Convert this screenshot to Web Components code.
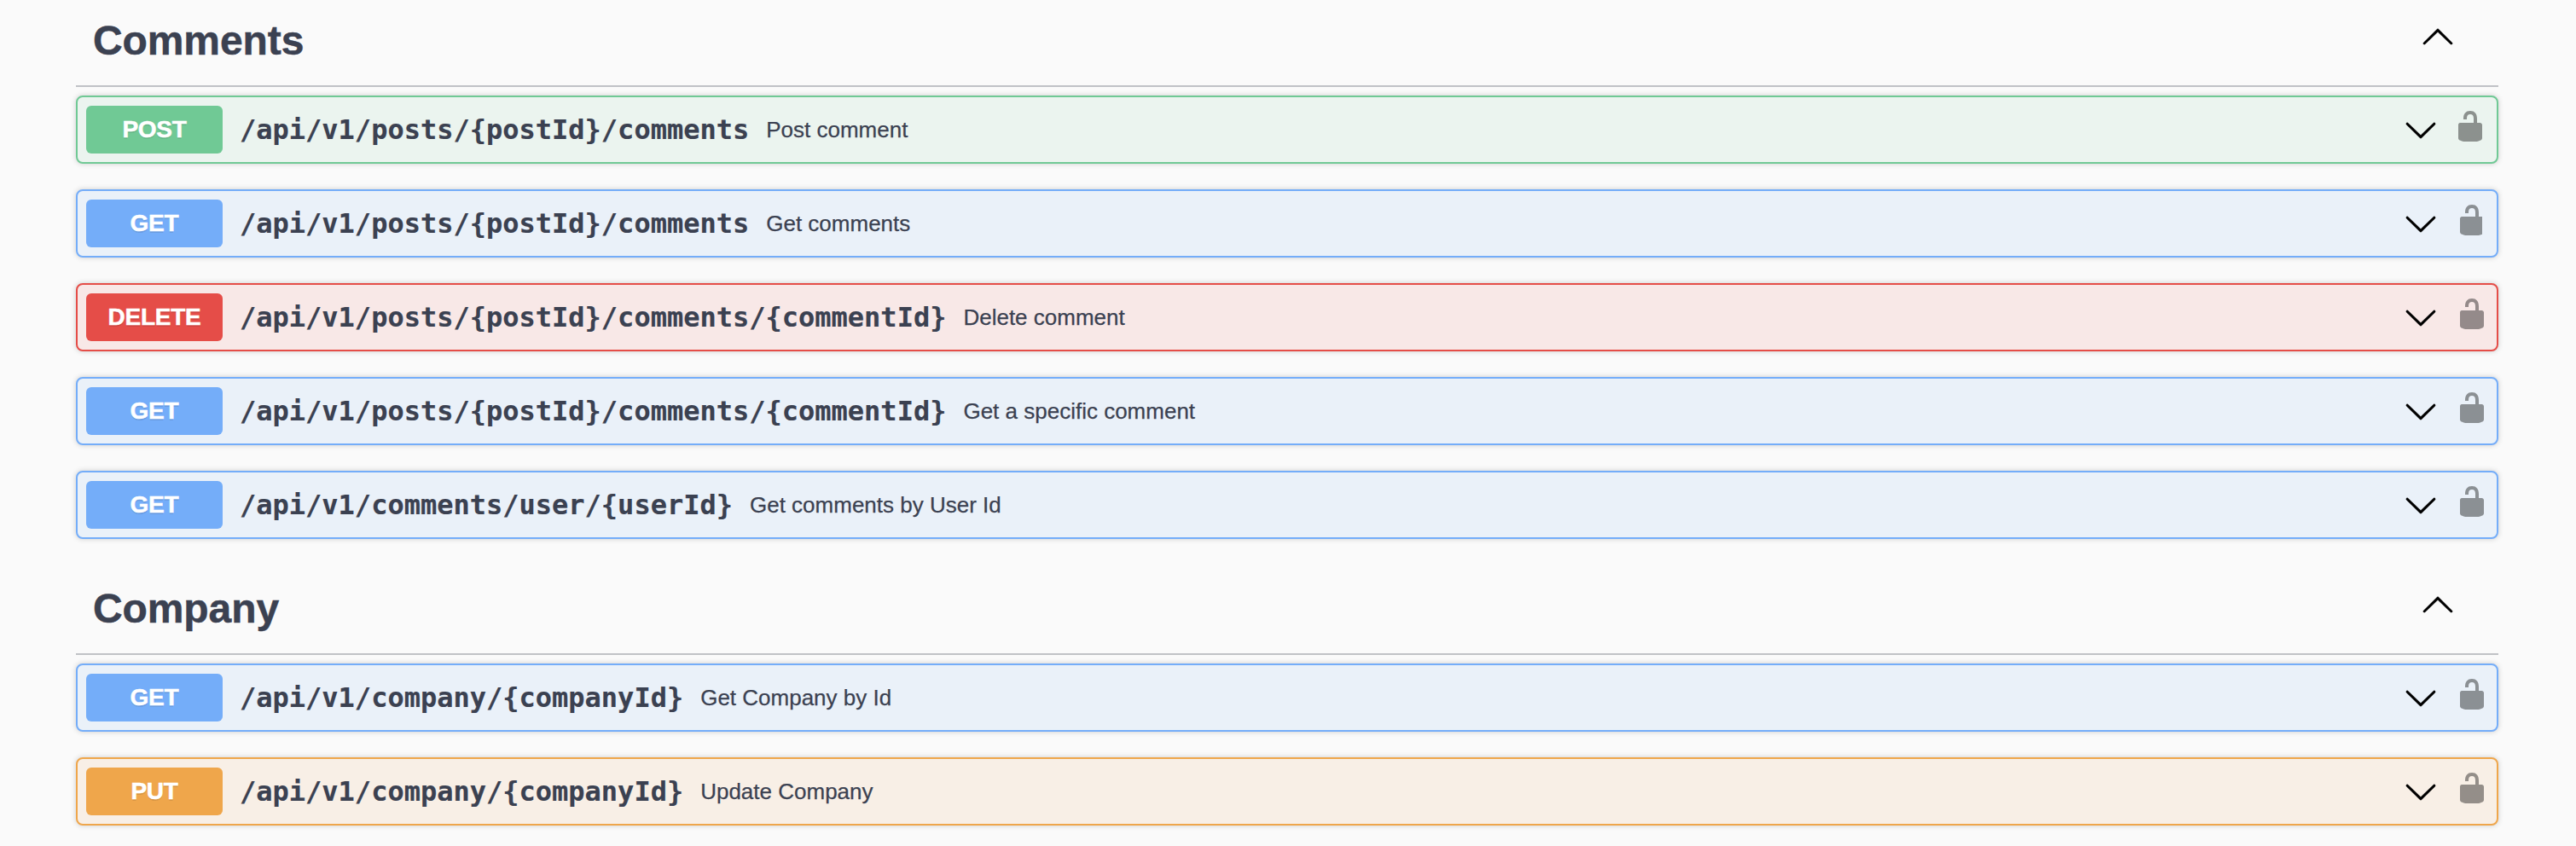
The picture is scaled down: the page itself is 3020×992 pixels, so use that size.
<!DOCTYPE html>
<html lang="en">
<head>
<meta charset="utf-8">
<title>API</title>
<style>
body{margin:0;background:#fafafa;color:#3b4151;font-family:"Liberation Sans",Arial,sans-serif;height:992px;overflow:hidden}
</style>
</head>
<body>
<api-page>
  <api-section heading="Comments">
    <api-operation method="post" path="/api/v1/posts/{postId}/comments">Post comment</api-operation>
    <api-operation method="get" narrow-lock path="/api/v1/posts/{postId}/comments">Get comments</api-operation>
    <api-operation method="delete" path="/api/v1/posts/{postId}/comments/{commentId}">Delete comment</api-operation>
    <api-operation method="get" path="/api/v1/posts/{postId}/comments/{commentId}">Get a specific comment</api-operation>
    <api-operation method="get" path="/api/v1/comments/user/{userId}">Get comments by User Id</api-operation>
  </api-section>
  <api-section heading="Company">
    <api-operation method="get" path="/api/v1/company/{companyId}">Get Company by Id</api-operation>
    <api-operation method="put" path="/api/v1/company/{companyId}">Update Company</api-operation>
  </api-section>
</api-page>
<script>
const ICONS = {
  up: 'M17.418 14.908c.272.268.709.268.979 0s.271-.701 0-.969l-7.908-7.83c-.27-.268-.707-.268-.979 0l-7.908 7.83c-.27.268-.27.701 0 .969s.709.268.979 0L10 7.767l7.418 7.141z',
  down: 'M17.418 6.109c.272-.268.709-.268.979 0s.271.701 0 .969l-7.908 7.83c-.27.268-.707.268-.979 0l-7.908-7.83c-.27-.268-.27-.701 0-.969s.709-.268.979 0L10 13.25l7.418-7.141z',
  unlocked: 'M15.8 8H14V5.6C14 2.703 12.665 1 10 1 7.334 1 6 2.703 6 5.6V6h2v-.801C8 3.754 8.797 3 10 3c1.203 0 2 .754 2 2.199V8H4c-.553 0-1 .646-1 1.199V17c0 .549.428 1.139.951 1.307l1.197.387C5.672 18.861 6.55 19 7.1 19h5.8c.549 0 1.428-.139 1.951-.307l1.196-.387c.524-.167.953-.757.953-1.306V9.199C17 8.646 16.352 8 15.8 8z'
};

customElements.define('api-icon', class extends HTMLElement {
  connectedCallback() {
    this.attachShadow({mode: 'open'}).innerHTML = `
      <style>
        :host{display:block;width:40px;height:40px;flex:none;color:#000}
        svg{display:block}
        :host([name=up]) path,:host([name=down]) path{stroke:currentColor;stroke-width:.14}
      </style>
      <svg width="40" height="40" viewBox="0 0 20 20" fill="currentColor"><path d="${ICONS[this.getAttribute('name')]}"/></svg>`;
  }
});

customElements.define('api-page', class extends HTMLElement {
  connectedCallback() {
    this.attachShadow({mode: 'open'}).innerHTML = `
      <style>:host{display:flex;flex-direction:column;gap:30px;width:2840px;margin-left:89px;margin-top:-4px}</style>
      <slot></slot>`;
  }
});

customElements.define('api-section', class extends HTMLElement {
  connectedCallback() {
    this.attachShadow({mode: 'open'}).innerHTML = `
      <style>
        :host{display:block}
        header{display:flex;align-items:center;justify-content:space-between;box-sizing:border-box;height:106px;
          padding:0 51px 0 20px;border-bottom:2px solid rgba(59,65,81,.3);margin-bottom:10px}
        h3{margin:0;font-size:48px;font-weight:700;line-height:56px;letter-spacing:-.1px;-webkit-text-stroke:.5px currentColor}
        header api-icon{margin-bottom:12px}
        .list{display:flex;flex-direction:column;gap:30px}
      </style>
      <header><h3>${this.getAttribute('heading')}</h3><api-icon name="up"></api-icon></header>
      <div class="list"><slot></slot></div>`;
  }
});

customElements.define('api-operation', class extends HTMLElement {
  connectedCallback() {
    const method = this.getAttribute('method');
    this.attachShadow({mode: 'open'}).innerHTML = `
      <style>
        :host{display:flex;align-items:center;box-sizing:border-box;height:80px;padding:0 9px 0 10px;
          border:2px solid var(--c);border-radius:8px;background:var(--bg);box-shadow:0 0 6px rgba(0,0,0,.19)}
        :host([method=post]){--c:#70c995;--bg:#ebf4ef;padding-right:11px}
        :host([method=get]){--c:#74adf9;--bg:#eaf1f9}
        :host([method=delete]){--c:#e54d48;--bg:#f8e8e7}
        :host([method=put]){--c:#efa64b;--bg:#f8efe6}
        .method{width:160px;height:56px;line-height:56px;border-radius:6px;background:var(--c);color:#fff;
          font-size:28px;font-weight:700;text-align:center;letter-spacing:-.25px;-webkit-text-stroke:.5px #fff;text-shadow:0 2px 0 rgba(0,0,0,.1)}
        .path{padding:0 20px;font:600 32px/40px "DejaVu Sans Mono",monospace;white-space:nowrap;-webkit-text-stroke:.2px currentColor}
        .summary{flex:1;font-size:26px;line-height:30px;-webkit-text-stroke:.25px currentColor}
        .lock{margin:0 0 8px 20px;opacity:.4}
        :host([method=post]) .lock{margin-left:18px}
        :host([narrow-lock]) .lock{clip-path:inset(0 8px 0 0)}
      </style>
      <span class="method">${method.toUpperCase()}</span>
      <span class="path">${this.getAttribute('path')}</span>
      <span class="summary"><slot></slot></span>
      <api-icon name="down"></api-icon>
      <api-icon class="lock" name="unlocked"></api-icon>`;
  }
});
</script>
</body>
</html>
